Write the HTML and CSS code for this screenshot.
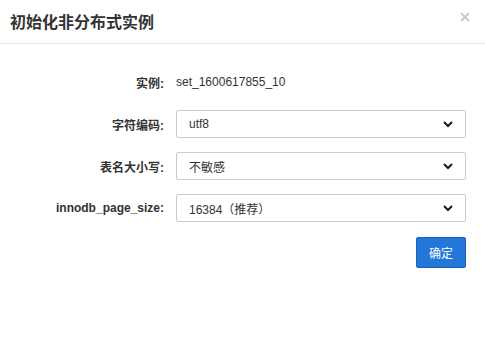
FILE: index.html
```html
<!DOCTYPE html>
<html lang="zh-CN">
<head>
    <meta charset="UTF-8">
    <meta name="viewport" content="width=device-width, initial-scale=1.0">
    <title>初始化非分布式实例</title>
    <link rel="stylesheet" href="styles.css">
</head>
<body>
    <div class="modal">
        <div class="modal-header">
            <h4 class="modal-title">初始化非分布式实例</h4>
            <span class="modal-close">
                <svg width="10" height="10" viewBox="0 0 10 10">
                    <path d="M1 1 L9 9 M9 1 L1 9" stroke="#c9c9c9" stroke-width="1.8" fill="none"/>
                </svg>
            </span>
        </div>
        <div class="modal-body">
            <div class="form-row">
                <label class="form-label">实例:</label>
                <div class="form-text">set_1600617855_10</div>
            </div>
            <div class="form-row">
                <label class="form-label">字符编码:</label>
                <div class="select">
                    <span>utf8</span>
                    <svg class="chevron" width="10" height="7" viewBox="0 0 10 7">
                        <path d="M1 1 L5 5 L9 1" stroke="#1a1a1a" stroke-width="2" fill="none"/>
                    </svg>
                </div>
            </div>
            <div class="form-row">
                <label class="form-label">表名大小写:</label>
                <div class="select">
                    <span>不敏感</span>
                    <svg class="chevron" width="10" height="7" viewBox="0 0 10 7">
                        <path d="M1 1 L5 5 L9 1" stroke="#1a1a1a" stroke-width="2" fill="none"/>
                    </svg>
                </div>
            </div>
            <div class="form-row">
                <label class="form-label">innodb_page_size:</label>
                <div class="select">
                    <span>16384（推荐）</span>
                    <svg class="chevron" width="10" height="7" viewBox="0 0 10 7">
                        <path d="M1 1 L5 5 L9 1" stroke="#1a1a1a" stroke-width="2" fill="none"/>
                    </svg>
                </div>
            </div>
            <div class="form-actions">
                <button class="btn-primary" type="button">确定</button>
            </div>
        </div>
    </div>
</body>
</html>
```
FILE: styles.css
```css
/* 基本样式 */
body {
    margin: 0;
    padding: 0;
    background-color: #fff;
    font-family: "Liberation Sans", "Noto Sans CJK SC", sans-serif;
    color: #333;
}

.modal {
    width: 485px;
    height: 355px;
    background-color: #fff;
}

/* 标题栏 */
.modal-header {
    height: 43px;
    border-bottom: 1px solid #e5e5e5;
    display: flex;
    align-items: center;
    justify-content: space-between;
    padding: 0 15px 0 10px;
}

.modal-title {
    margin: 0;
    font-size: 16px;
    font-weight: bold;
    color: #333;
    padding-bottom: 1px;
}

.modal-close {
    display: flex;
    margin-bottom: 9px;
}

/* 表单 */
.modal-body {
    padding: 24px 19px 0 0;
    display: flex;
    flex-direction: column;
    gap: 14px;
}

.form-row {
    display: flex;
    align-items: center;
    gap: 12px;
    height: 28px;
}

.form-label {
    width: 164px;
    text-align: right;
    font-size: 12px;
    font-weight: bold;
    color: #333;
}

.form-text {
    font-size: 12px;
    color: #333;
}

.select {
    flex: 1;
    height: 26px;
    border: 1px solid #ccc;
    border-radius: 2px;
    display: flex;
    align-items: center;
    justify-content: space-between;
    padding: 0 12px 0 12px;
    font-size: 12px;
    color: #333;
}

.chevron {
    display: block;
}

.form-actions {
    display: flex;
    justify-content: flex-end;
    margin-top: 1px;
}

.btn-primary {
    width: 50px;
    height: 31px;
    background-color: #2377d8;
    border: 1px solid #1b62b8;
    border-radius: 2px;
    color: #fff;
    font-size: 12px;
    font-family: "Liberation Sans", "Noto Sans CJK SC", sans-serif;
    padding: 0;
    cursor: pointer;
}
```
